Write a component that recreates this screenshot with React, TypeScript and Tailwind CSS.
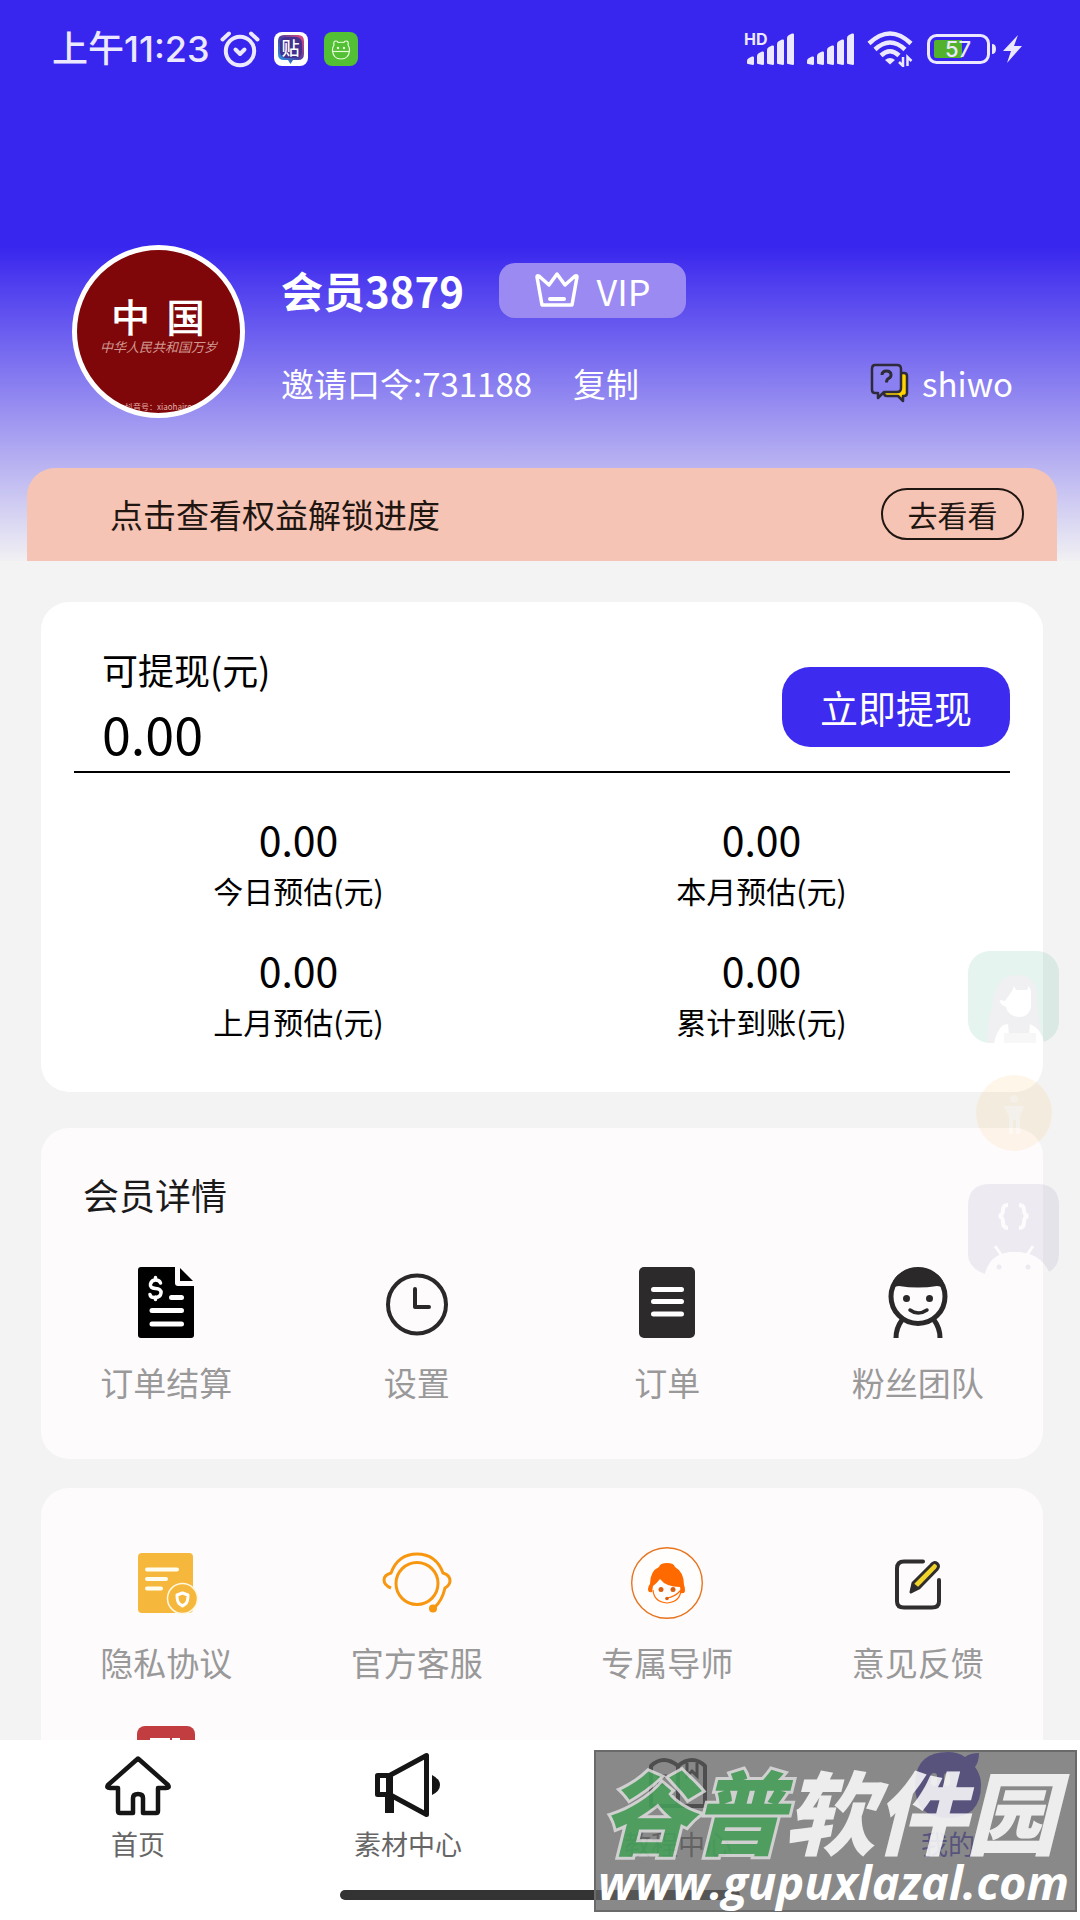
import React, { useState } from 'react';

const BAR_HEIGHTS = [7, 12, 18, 24, 30];

const SignalBars: React.FC = () => (
  <svg className="w-[48px] h-[32px]" viewBox="0 0 48 32" fill="#ebe8ff">
    {BAR_HEIGHTS.map((h, i) => (
      <path
        key={h}
        d={`M${i * 10 + 1} 31 q-1 0 -1 -1 v${-(h - 5)} q0 -2 2 -3 l3 -1.5 q2 -.5 2 1 v${h - 1} q0 1.500 -1 1.500 z`}
      />
    ))}
  </svg>
);

const AlarmIcon: React.FC = () => (
  <svg className="w-[40px] h-[38px]" viewBox="0 0 40 38" fill="none" stroke="#ebe8ff" strokeLinecap="round" strokeLinejoin="round">
    <circle cx="20" cy="21" r="14.200" strokeWidth="4" />
    <path d="M15.500 19.500l4.500 4.500 4.500-4.500" strokeWidth="4" />
    <path d="M2.500 9.500L9 3.500M37.500 9.500L31 3.500" strokeWidth="4" />
  </svg>
);

const TiebaBadge: React.FC = () => (
  <span className="relative flex w-[34px] h-[34px] items-center justify-center rounded-lg bg-white">
    <svg className="absolute inset-0" viewBox="0 0 34 34">
      <defs>
        <linearGradient id="tieba" x1="0" y1="1" x2="1" y2="0">
          <stop offset="0" stopColor="#22a6f2" />
          <stop offset="0.5" stopColor="#4a3fa0" />
          <stop offset="1" stopColor="#e8477d" />
        </linearGradient>
      </defs>
      <path d="M10 3h14q6 0 6 6v13q0 6-6 6h-5l-2.500 4-2.500-4h-4q-6 0-6-6V9q0-6 6-6z" fill="url(#tieba)" />
      <rect x="6" y="5" width="22" height="21" rx="6" fill="#43308f" />
    </svg>
    <span className="relative text-[18px] leading-[18px] font-medium text-white pb-1">贴</span>
  </span>
);

const GreenBadge: React.FC = () => (
  <span className="w-[34px] h-[34px] rounded-lg bg-[#52bf34]">
    <svg viewBox="0 0 34 34" fill="none" stroke="#e6ffd8" strokeWidth="1.200" strokeLinejoin="round">
      <path d="M10 13q-1-4 2-4 2 0 2 1.500 3-.5 6 0 0-1.500 2-1.500 3 0 2 4 2 3 1.500 6-1 8-8.500 8t-8.500-8q-.5-3 1.500-6z" />
      <path d="M9 19.500h16" />
      <circle cx="14" cy="16" r=".6" />
      <circle cx="20" cy="16" r=".6" />
    </svg>
  </span>
);

const WifiIcon: React.FC = () => (
  <svg className="w-[48px] h-[36px]" viewBox="0 0 48 36" fill="none" stroke="#ebe8ff" strokeWidth="4.500">
    <path d="M2 12.500Q23 -7.500 44 12.500" />
    <path d="M8 18.500Q23 4.500 38 18.500" />
    <path d="M14 24.500Q23 16 32 24.500" />
    <path d="M18 29l5 4.500 5-4.500q-5-4-10 0z" fill="#ebe8ff" stroke="none" />
    <path d="M36 26v9l-4-4M40.500 35v-9l4 4" strokeWidth="2.500" />
  </svg>
);

const BatteryIcon: React.FC = () => (
  <svg className="w-[96px] h-[32px]" viewBox="0 0 96 32">
    <rect x="1.500" y="2.500" width="60" height="27" rx="8" fill="none" stroke="#ebe8ff" strokeWidth="3" />
    <path d="M9 7h26v18H9q-2 0-2-2V9q0-2 2-2z" fill="#52b22e" />
    <path d="M65 11q4 0 4 5t-4 5z" fill="#ebe8ff" />
    <path d="M91 2L76 18h8l-4 12 15-17h-8z" fill="#ebe8ff" />
    <text x="31" y="24" textAnchor="middle" fill="#ebe8ff" fontSize="22" fontWeight="500" fontFamily="Inter, sans-serif">57</text>
  </svg>
);

const CrownIcon: React.FC = () => (
  <svg className="w-[44px] h-[36px]" viewBox="0 0 44 36" fill="none" stroke="#fff" strokeWidth="3.500" strokeLinejoin="round" strokeLinecap="round">
    <path d="M2 5q0-2 2-1l10 9L22 2l8 11 10-9q2-1 2 1l-5 28H7z" />
    <path d="M15 27h14" strokeWidth="4" />
  </svg>
);

const QuestionIcon: React.FC = () => (
  <svg className="w-[40px] h-[40px]" viewBox="0 0 40 40" fill="none" stroke="#2f2b3a" strokeWidth="2.500" strokeLinejoin="round">
    <path d="M32 10h2q3 0 3 3v17q0 3-3 3h-1v5l-5-5H17q-3 0-3-3z" fill="#ffd400" />
    <path d="M5 2h22q4 0 4 4v19q0 4-4 4H14l-6 6v-5H5q-3 0-3-3V6q0-4 3-4z" fill="#8b80f2" />
    <path d="M12 12q0-4 4.500-4t4.500 4q0 2.500-2.500 3.500-2 1-2 4" strokeWidth="3" />
  </svg>
);

const iconClass = 'w-[72px] h-[72px]';

const BillIcon: React.FC = () => (
  <svg className={iconClass} viewBox="0 0 72 72">
    <path d="M11 0h34v16q0 3 3 3h16v49q0 3-3 3H11q-3 0-3-3V3q0-3 3-3z" fill="#000" />
    <path d="M50 1l13 13H50z" fill="#000" />
    <g stroke="#fff" strokeWidth="5" strokeLinecap="round" fill="none">
      <path d="M41.500 30.500h10M22 43.500h29.500M22 57h29.500" />
      <path d="M30.500 16q-1-3-5-3t-5 4 5 4.500 5.500 4.500-5.500 4.500-5.500-3M25.500 10.500v2M25.500 30v2.500" strokeWidth="3.500" />
    </g>
  </svg>
);

const ClockIcon: React.FC = () => (
  <svg className={iconClass} viewBox="0 0 72 72" fill="none" stroke="#2a2829" strokeWidth="4" strokeLinecap="round">
    <circle cx="36" cy="37.500" r="29" />
    <path d="M34 22v18h14" strokeLinejoin="round" />
  </svg>
);

const OrderIcon: React.FC = () => (
  <svg className={iconClass} viewBox="0 0 72 72">
    <rect x="8" y="0" width="56" height="71" rx="5" fill="#2c2a2b" />
    <path d="M22.500 22.500h28M22.500 34.500h28M22.500 47h28" stroke="#fff" strokeWidth="5" strokeLinecap="round" />
  </svg>
);

const FansIcon: React.FC = () => (
  <svg className={iconClass} viewBox="0 0 72 72" fill="none" stroke="#2a2829" strokeWidth="5">
    <circle cx="36" cy="29.500" r="27" />
    <path d="M9 26Q9 2 36 2t27 24q-1-7-8-7-19 3-38 0-7 0-8 7z" fill="#2a2829" stroke="none" />
    <circle cx="24.500" cy="31.500" r="3.500" fill="#2a2829" stroke="none" />
    <circle cx="47.500" cy="31.500" r="3.500" fill="#2a2829" stroke="none" />
    <path d="M28 43q8 6 17 0" strokeWidth="3.500" strokeLinecap="round" />
    <path d="M20 53q-6 8-6 18M52 53q6 8 6 18" />
  </svg>
);

const PrivacyIcon: React.FC = () => (
  <svg className={iconClass} viewBox="0 0 72 72">
    <rect x="8" y="6" width="55" height="60" rx="4" fill="#f6b83c" />
    <path d="M17 22.500h30M17 32h19M17 41.500h14" stroke="#fffdf0" strokeWidth="4" strokeLinecap="round" />
    <circle cx="52.500" cy="51.500" r="15" fill="#f6b83c" stroke="#fff8e0" strokeWidth="1.500" />
    <path d="M52.500 46l5.500 2q0 6-2 8.500L52.500 59l-3.500-2.500q-2-2.500-2-8.500z" fill="none" stroke="#fff" strokeWidth="3" strokeLinejoin="round" />
  </svg>
);

const SupportIcon: React.FC = () => (
  <svg className={iconClass} viewBox="0 0 72 72" fill="none" stroke="#f7970f" strokeWidth="3">
    <circle cx="36" cy="36.500" r="21" />
    <path d="M10 41q-7-3-7-8 0-5 7-7Q17 7 36 7t26 19q7 2 7 8 0 4-5 7-3 13-11 20" />
    <circle cx="52" cy="61.500" r="4" fill="#f7970f" stroke="none" />
  </svg>
);

const TutorIcon: React.FC = () => (
  <svg className={iconClass} viewBox="0 0 72 72">
    <circle cx="36" cy="36" r="35.300" fill="#fffefd" stroke="#e8741e" strokeWidth="1.400" />
    <path d="M28 20q1-4 8-4t8 4q9 5 9 18 1 2 1 5 0 4-4 3l-1-6q-14 0-20-8-3 4-7 7l-1 6q-4 1-4-3 0-3 2-5 0-13 9-17z" fill="#ff6a00" />
    <path d="M22 43q1 12 14 13 13-1 14-13-6 7-14 8" fill="none" stroke="#ff6a00" strokeWidth="1.200" />
    <circle cx="30" cy="42.500" r="2.500" fill="#d95f10" />
    <circle cx="42" cy="42.500" r="2.500" fill="#d95f10" />
    <circle cx="36" cy="51.500" r="1.800" fill="#d95f10" />
  </svg>
);

const FeedbackIcon: React.FC = () => (
  <svg className={iconClass} viewBox="0 0 72 72" fill="none" stroke="#2f2d2d" strokeLinecap="round" strokeLinejoin="round">
    <path d="M41 14.500H22q-7 0-7 7v33q0 6 7 6h28q7 0 7-6V33" strokeWidth="4" />
    <path d="M49 18q3-4 6-1.500t0 6L37 41l-8 4 2-9z" fill="#f0d42a" strokeWidth="3" />
    <path d="M31 37l5 4-7 4z" fill="#2f2d2d" strokeWidth="2" />
  </svg>
);

const CourseIcon: React.FC = () => (
  <svg className={iconClass} viewBox="0 0 72 72">
    <rect x="7" y="0" width="58" height="58" rx="8" fill="#c13d40" />
    <path d="M20 12h20v20H20zM42 12h8v20h-8z" fill="#fff" />
  </svg>
);

const navIconClass = 'w-[68px] h-[68px]';

const HomeIcon: React.FC = () => (
  <svg className={navIconClass} viewBox="0 0 68 68" fill="none" stroke="#151515" strokeWidth="4.500" strokeLinejoin="round">
    <path d="M34 7.500L4 34q-2 3 2 3h8v23q0 2 2 2h13V47q0-4 5-4t5 4v15h13q2 0 2-2V37h8q4 0 2-3z" />
  </svg>
);

const MegaphoneIcon: React.FC = () => (
  <svg className={navIconClass} viewBox="0 0 68 68" fill="none" stroke="#151515" strokeWidth="5" strokeLinejoin="round">
    <path d="M3.500 24.500h11v19h-11z" />
    <path d="M16.500 24L52.500 4.500v59L16.500 44z" />
    <path d="M15.500 44v18" strokeWidth="9" />
    <path d="M58 24q8 4 8 10t-8 10z" fill="#151515" stroke="none" />
  </svg>
);

const BookIcon: React.FC = () => (
  <svg className={navIconClass} viewBox="0 0 68 68" fill="none" stroke="#151515" strokeWidth="4">
    <path d="M34 15q-7-6-14-6T7 15v40h54V15q-6-6-13-6t-14 6v38" strokeLinejoin="round" />
    <path d="M43 12v13l5-5 5 5V12M13 25h10M13 33h8" strokeWidth="3" />
  </svg>
);

const MineIcon: React.FC = () => (
  <svg className={navIconClass} viewBox="0 0 68 68">
    <path d="M34 1q10 0 17 5 5-4 14-4 0 9-4 14 6 8 6 18 0 33-33 33T1 34 34 1z" fill="#3a2bd0" />
    <rect x="17" y="22" width="6" height="13" rx="3" fill="#fff" />
    <rect x="30" y="22" width="6" height="13" rx="3" fill="#fff" />
  </svg>
);

const stats = [
  { label: '今日预估(元)', value: '0.00' },
  { label: '本月预估(元)', value: '0.00' },
  { label: '上月预估(元)', value: '0.00' },
  { label: '累计到账(元)', value: '0.00' }
];

const memberItems = [
  { label: '订单结算', Icon: BillIcon },
  { label: '设置', Icon: ClockIcon },
  { label: '订单', Icon: OrderIcon },
  { label: '粉丝团队', Icon: FansIcon }
];

const serviceItems = [
  { label: '隐私协议', Icon: PrivacyIcon },
  { label: '官方客服', Icon: SupportIcon },
  { label: '专属导师', Icon: TutorIcon },
  { label: '意见反馈', Icon: FeedbackIcon },
  { label: '', Icon: CourseIcon }
];

const tabs = [
  { id: 'home', label: '首页', Icon: HomeIcon },
  { id: 'material', label: '素材中心', Icon: MegaphoneIcon },
  { id: 'course', label: '教程中心', Icon: BookIcon },
  { id: 'mine', label: '我的', Icon: MineIcon }
];

const MenuGrid: React.FC<{ items: { label: string; Icon: React.FC }[] }> = ({ items }) => (
  <div className="grid grid-cols-4 gap-y-10">
    {items.map(({ label, Icon }, index) => (
      <button key={index} className="flex flex-col items-center gap-[19px]">
        <Icon />
        <span className="text-[33px] leading-[48px] text-[#999]">{label}</span>
      </button>
    ))}
  </div>
);

const StatusBar: React.FC = () => (
  <div className="flex h-[98px] items-center justify-between pl-[52px] pr-[57px] text-[#ebe8ff]">
    <div className="flex items-center">
      <span className="font-['Inter','Noto_Sans_CJK_SC',sans-serif] text-[36px] leading-[48px] font-medium">上午11:23</span>
      <span className="ml-[10px] mr-[14px]"><AlarmIcon /></span>
      <div className="flex gap-4">
        <TiebaBadge />
        <GreenBadge />
      </div>
    </div>
    <div className="flex items-center gap-3">
      <div className="relative">
        <span className="absolute -top-[2px] -left-[3px] font-['Inter'] text-[16px] leading-[16px] font-bold">HD</span>
        <SignalBars />
      </div>
      <SignalBars />
      <WifiIcon />
      <BatteryIcon />
    </div>
  </div>
);

// 右侧半透明悬浮图标
const FloatingIcons: React.FC = () => (
  <div className="absolute right-[21px] top-[951px] flex flex-col items-center gap-8 opacity-10">
    <svg className="w-[91px] h-[92px]" viewBox="0 0 91 92">
      <rect width="91" height="92" rx="22" fill="#109868" />
      <path d="M20 92q-2-20 4-34 2-34 26-34 16 0 19 18 0 20 6 50z" fill="#778" />
      <path d="M44 40l2-5 2 4h11l2-4 2 5v16q-2 10-12 10-11-1-13-10-7-3-6-7l5 1z" fill="#fff" />
      <path d="M26 92q3-13 9-18l5-1 1 10h20l1-10q12 5 14 19z" fill="#fff" />
      <path d="M36 92V82h32v10z" fill="#bbb" />
    </svg>
    <svg className="w-[76px] h-[77px]" viewBox="0 0 76 77">
      <circle cx="38" cy="38" r="38" fill="#ffb03a" />
      <path d="M28 31h20l-4 10v18h-4V45h-3v14h-4V41z" fill="#fff" opacity=".6" />
      <circle cx="38" cy="24" r="4" fill="#fff" opacity=".4" />
    </svg>
    <svg className="w-[91px] h-[92px]" viewBox="0 0 91 92">
      <path d="M22 0h47q22 0 22 22v48q0 12-10 18Q72 68 47 68T17 90Q0 84 0 70V22Q0 0 22 0z" fill="#606095" />
      <path d="M17 90q6-22 30-22t34 20z" fill="#fff" />
      <path d="M40 21q-5 0-5 5 0 5-4 6 4 1 4 6 0 6 5 6M51 21q5 0 5 5 0 5 4 6-4 1-4 6 0 6-5 6" fill="none" stroke="#fff" strokeWidth="4" />
      <path d="M27 62l7 10M65 62l-6 9" stroke="#fff" strokeWidth="3" />
      <circle cx="31" cy="83" r="2.500" fill="#606095" />
      <circle cx="60" cy="83" r="2.500" fill="#606095" />
    </svg>
  </div>
);

const Watermark: React.FC = () => (
  <div className="pointer-events-none absolute bottom-2 right-[3px] flex h-[162px] w-[483px] flex-col items-center border-2 border-[#6a6a6a] bg-[#616161]/75 pt-[14px] whitespace-nowrap italic text-white">
    <div className="flex pr-3 text-[91px] leading-[84px] font-black opacity-85">
      <span className="text-[#45a25a] [paint-order:stroke_fill] [-webkit-text-stroke:6px_#dddddd]">谷普</span>
      <span>软件园</span>
    </div>
    <p className="pr-1 pt-1 font-['Open_Sans'] text-[47px] leading-[56px] font-bold">www.gupuxlazal.com</p>
  </div>
);

const App: React.FC = () => {
  const [activeTab, setActiveTab] = useState('mine');

  return (
    <div className="relative flex h-screen flex-col overflow-hidden bg-[#f3f3f3] font-['Noto_Sans_CJK_SC','Noto_Sans',sans-serif] text-black">
      <main className="min-h-0 flex-1 overflow-y-auto [scrollbar-width:none]">
        <header className="bg-[linear-gradient(#3825ee_245px,#f3f3f3_565px)]">
          <StatusBar />

          {/* 用户信息 */}
          <section className="flex pt-[147px] pl-[72px] pr-[67px] text-white">
            <div className="flex h-[173px] w-[173px] shrink-0 flex-col items-center overflow-hidden rounded-full border-[5px] border-white bg-[#800709] pt-[51px]">
              <div className="flex gap-4 font-serif text-[38px] leading-[36px] font-bold">
                <span>中</span>
                <span>国</span>
              </div>
              <p className="mt-[3px] text-[13px] leading-[14px] italic text-[#d09a92]">中华人民共和国万岁</p>
              <p className="mt-[48px] text-[8px] leading-[10px] text-[#e0b0a8]">抖音号：xiaohairo</p>
            </div>

            <div className="ml-9 flex flex-1 flex-col gap-[41px] pt-[17px]">
              <div className="flex items-center gap-[35px]">
                <h1 className="text-[42px] leading-[56px] font-bold">会员3879</h1>
                <span className="flex h-[55px] w-[187px] items-center justify-center gap-[18px] rounded-2xl bg-[#9a8af2] text-[36px] leading-[48px]">
                  <CrownIcon />
                  VIP
                </span>
              </div>
              <div className="flex items-center text-[33px] leading-[48px]">
                <span>邀请口令:731188</span>
                <button className="ml-[41px]">复制</button>
                <a href="#service" className="ml-auto flex items-center gap-3">
                  <QuestionIcon />
                  shiwo
                </a>
              </div>
            </div>
          </section>

          {/* 权益横幅 */}
          <section className="mt-[50px] ml-[27px] mr-[23px] flex h-[93px] items-center justify-between rounded-t-[28px] bg-[#f6c4b4] pl-[83px] pr-[33px] pb-[2px] text-[#1f1612]">
            <p className="text-[33px] leading-[48px]">点击查看权益解锁进度</p>
            <button className="h-[52px] w-[143px] rounded-full border-2 border-[#1f1612] text-[30px] leading-[44px]">去看看</button>
          </section>
        </header>

        <div className="mt-[41px] ml-[41px] mr-[37px] flex flex-col">
          {/* 收益 */}
          <section className="rounded-[28px] bg-white pt-[43px] pb-[47px]">
            <div className="mx-[33px] flex items-end justify-between border-b-2 border-black">
              <div className="pl-7 pb-[6px]">
                <p className="text-[36px] leading-[48px]">可提现(元)</p>
                <p className="mt-2 text-[52px] leading-[64px]">0.00</p>
              </div>
              <button className="mb-6 h-[80px] w-[228px] rounded-[28px] bg-[#3d2bef] text-[38px] leading-[56px] text-white">立即提现</button>
            </div>
            <dl className="mt-[37px] ml-[26px] mr-[50px] grid grid-cols-2 gap-y-[27px] text-center">
              {stats.map((stat) => (
                <div key={stat.label} className="flex flex-col-reverse">
                  <dt className="text-[30px] leading-[48px]">{stat.label}</dt>
                  <dd className="text-[41px] leading-[56px]">{stat.value}</dd>
                </div>
              ))}
            </dl>
          </section>

          {/* 会员详情 */}
          <section className="mt-9 rounded-[28px] bg-[#fefbfd] pt-[42px] pb-[53px]">
            <h2 className="mb-[49px] pl-[42px] text-[36px] leading-[48px] text-[#1a1a1a]">会员详情</h2>
            <MenuGrid items={memberItems} />
          </section>

          <section className="mt-[29px] rounded-[28px] bg-[#fefbfd] pt-[59px] pb-[51px]">
            <MenuGrid items={serviceItems} />
          </section>
        </div>
      </main>

      <FloatingIcons />

      {/* 底部导航 */}
      <nav className="relative h-[180px] shrink-0 bg-white pt-[11px]">
        <div className="ml-[3px] -mr-[3px] grid grid-cols-4">
          {tabs.map(({ id, label, Icon }) => (
            <button key={id} className="flex flex-col items-center gap-[5px]" onClick={() => setActiveTab(id)}>
              <Icon />
              <span className={`text-[27px] leading-[40px] ${activeTab === id ? 'text-[#3a2bd0]' : 'text-[#666]'}`}>{label}</span>
            </button>
          ))}
        </div>
        <div className="mx-auto mt-[26px] h-[10px] w-[400px] rounded-full bg-[#333]" />
        <Watermark />
      </nav>
    </div>
  );
};

export default App;
